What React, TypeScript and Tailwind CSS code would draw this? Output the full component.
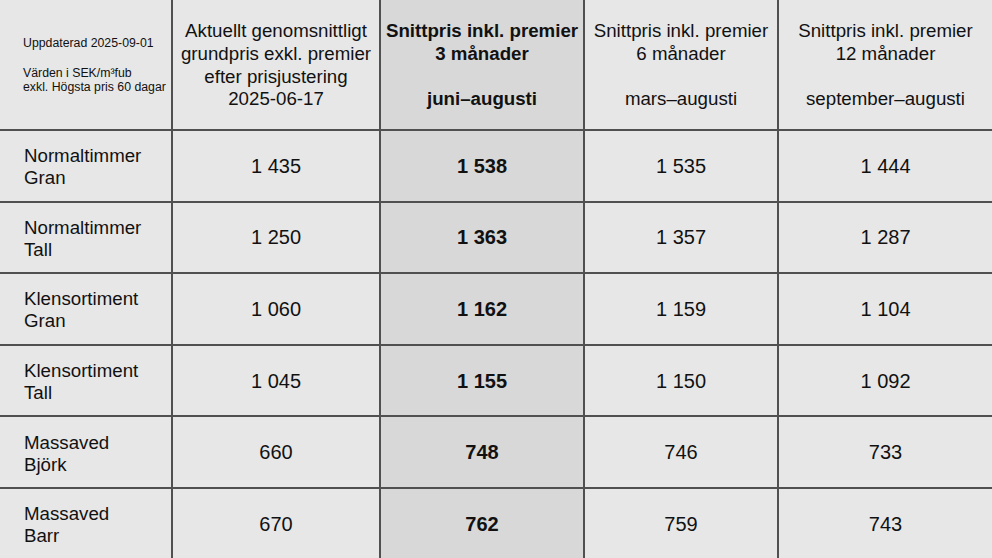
const rows = [
  { label: ["Normaltimmer", "Gran"], values: ["1 435", "1 538", "1 535", "1 444"] },
  { label: ["Normaltimmer", "Tall"], values: ["1 250", "1 363", "1 357", "1 287"] },
  { label: ["Klensortiment", "Gran"], values: ["1 060", "1 162", "1 159", "1 104"] },
  { label: ["Klensortiment", "Tall"], values: ["1 045", "1 155", "1 150", "1 092"] },
  { label: ["Massaved", "Björk"], values: ["660", "748", "746", "733"] },
  { label: ["Massaved", "Barr"], values: ["670", "762", "759", "743"] },
];

const cell = "flex items-center justify-center bg-[#e7e7e7]";
const hiCell = "flex items-center justify-center bg-[#d8d8d8]";

export default function App() {
  return (
    <div className="grid h-[558px] w-[992px] grid-cols-[171px_206px_202px_192px_1fr] grid-rows-[129px_repeat(6,69.6px)] gap-[2px] overflow-hidden bg-[#505050] font-['Liberation_Sans',Arial,sans-serif] text-[#111]">
      {/* Header */}
      <div className="flex flex-col justify-center bg-[#e7e7e7] pl-[23px] pt-[2px] text-[12.3px] leading-[14.8px]">
        <span>Uppdaterad 2025-09-01</span>
        <span className="h-[14.8px]" />
        <span>Värden i SEK/m³fub</span>
        <span>exkl. Högsta pris 60 dagar</span>
      </div>
      <div className={`${cell} flex-col pt-[2px] text-center text-[18.7px] leading-[22.6px]`}>
        <span className="whitespace-nowrap">Aktuellt genomsnittligt</span>
        <span className="whitespace-nowrap">grundpris exkl. premier</span>
        <span className="whitespace-nowrap">efter prisjustering</span>
        <span className="whitespace-nowrap">2025-06-17</span>
      </div>
      <div className={`${hiCell} flex-col pt-[2px] text-center text-[18.7px] font-bold leading-[22.6px]`}>
        <span className="whitespace-nowrap">Snittpris inkl. premier</span>
        <span className="whitespace-nowrap">3 månader</span>
        <span className="h-[22.6px]" />
        <span className="whitespace-nowrap">juni–augusti</span>
      </div>
      <div className={`${cell} flex-col pt-[2px] text-center text-[18.7px] leading-[22.6px]`}>
        <span className="whitespace-nowrap">Snittpris inkl. premier</span>
        <span className="whitespace-nowrap">6 månader</span>
        <span className="h-[22.6px]" />
        <span className="whitespace-nowrap">mars–augusti</span>
      </div>
      <div className={`${cell} flex-col pt-[2px] text-center text-[18.7px] leading-[22.6px]`}>
        <span className="whitespace-nowrap">Snittpris inkl. premier</span>
        <span className="whitespace-nowrap">12 månader</span>
        <span className="h-[22.6px]" />
        <span className="whitespace-nowrap">september–augusti</span>
      </div>

      {/* Body */}
      {rows.map((r) => (
        <div key={r.label.join("-")} className="contents">
          <div className="flex flex-col justify-center bg-[#e7e7e7] pl-[24px] pt-[3px] text-[18.7px] leading-[22px]">
            <span>{r.label[0]}</span>
            <span>{r.label[1]}</span>
          </div>
          <div className={`${cell} text-[20px]`}>{r.values[0]}</div>
          <div className={`${hiCell} text-[20px] font-bold`}>{r.values[1]}</div>
          <div className={`${cell} text-[20px]`}>{r.values[2]}</div>
          <div className={`${cell} text-[20px]`}>{r.values[3]}</div>
        </div>
      ))}
    </div>
  );
}
